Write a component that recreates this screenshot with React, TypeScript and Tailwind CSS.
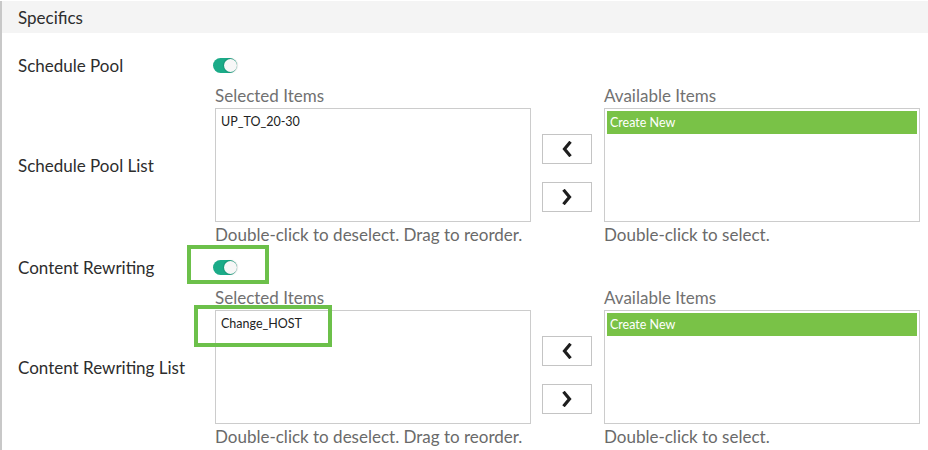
import React from "react";

const font = { fontFamily: "Lato, 'Open Sans', sans-serif" };

function Toggle() {
  return (
    <div className="relative h-[15px] w-[24px] rounded-full bg-[#1bab88]">
      <div className="absolute right-0 top-[1px] h-[13px] w-[13px] rounded-full bg-[#f7f7f7] shadow-[0_0_1px_1px_rgba(0,0,0,0.12)]" />
    </div>
  );
}

function Chevron({ dir }: { dir: "left" | "right" }) {
  return (
    <svg width="12" height="16" viewBox="0 0 12 16">
      <polyline
        points={dir === "left" ? "8.5,2 3.5,8 8.5,14" : "3.5,2 8.5,8 3.5,14"}
        fill="none"
        stroke="#1e1e1e"
        strokeWidth="3.2"
        strokeLinecap="square"
      />
    </svg>
  );
}

function ListBlock({ item, highlight }: { item: string; highlight?: boolean }) {
  return (
    <div className="flex items-start">
      <div className="flex w-[316px] flex-col">
        <div className="h-[20px] pt-px text-[17px] leading-[20px] text-[#717171]">Selected Items</div>
        <div className="relative mt-[3px] h-[114px] border border-[#cccccc] bg-white">
          <div className="px-[5px] pt-[5px] text-[12.5px] leading-[16px] text-[#222]">{item}</div>
          {highlight && (
            <div className="absolute left-[-22px] top-[-6px] h-[42px] w-[138px] border-4 border-[#6cc04a]" />
          )}
        </div>
        <div className="mt-[2px] h-[20px] whitespace-nowrap pt-px text-[17px] leading-[20px] text-[#6a6a6a]">
          Double-click to deselect. Drag to reorder.
        </div>
      </div>
      <div className="ml-[11px] mt-[49px] flex w-[50px] flex-col gap-[18px]">
        <button className="flex h-[30px] w-[50px] items-center justify-center border border-[#c4c4c4] bg-white">
          <Chevron dir="left" />
        </button>
        <button className="flex h-[30px] w-[50px] items-center justify-center border border-[#c4c4c4] bg-white">
          <Chevron dir="right" />
        </button>
      </div>
      <div className="ml-[12px] flex w-[316px] flex-col">
        <div className="h-[20px] pt-px text-[17px] leading-[20px] text-[#717171]">Available Items</div>
        <div className="mt-[3px] h-[114px] border border-[#cccccc] bg-white p-[2px]">
          <div className="h-[23px] bg-[#79c247] px-[3px] pt-[4px] text-[12.5px] leading-[16px] text-white">
            Create New
          </div>
        </div>
        <div className="mt-[2px] h-[20px] whitespace-nowrap pt-px text-[17px] leading-[20px] text-[#6a6a6a]">
          Double-click to select.
        </div>
      </div>
    </div>
  );
}

export default function App() {
  return (
    <div className="h-[450px] w-[928px] overflow-hidden bg-white" style={font}>
      <div className="mt-px flex h-[449px] flex-col border-l-2 border-[#c8c8c8]">
        <div className="flex h-[32px] items-center bg-[#f4f4f4] pl-[16px] pt-px text-[17px] text-[#2d2d2d]">
          Specifics
        </div>
        <div className="flex flex-col pt-[22px]">
          {/* Schedule Pool */}
          <div className="flex h-[20px] items-center">
            <div className="w-[213px] shrink-0 pl-[16px] pt-[2px] text-[17px] leading-[20px] text-[#2d2d2d]">Schedule Pool</div>
            <div className="-ml-[2px]">
              <Toggle />
            </div>
          </div>
          <div className="mt-[10px] flex items-center">
            <div className="w-[213px] shrink-0 pl-[16px] pt-[2px] text-[17px] leading-[20px] text-[#2d2d2d]">Schedule Pool List</div>
            <ListBlock item="UP_TO_20-30" />
          </div>
          {/* Content Rewriting */}
          <div className="mt-[13px] flex h-[20px] items-center">
            <div className="w-[213px] shrink-0 pl-[16px] pt-[2px] text-[17px] leading-[20px] text-[#2d2d2d]">Content Rewriting</div>
            <div className="relative -ml-[2px]">
              <Toggle />
              <div className="absolute left-[-26px] top-[-15px] h-[39px] w-[82px] border-4 border-[#6cc04a]" />
            </div>
          </div>
          <div className="mt-[10px] flex items-center">
            <div className="w-[213px] shrink-0 pl-[16px] pt-[2px] text-[17px] leading-[20px] text-[#2d2d2d]">Content Rewriting List</div>
            <ListBlock item="Change_HOST" highlight />
          </div>
        </div>
      </div>
    </div>
  );
}
